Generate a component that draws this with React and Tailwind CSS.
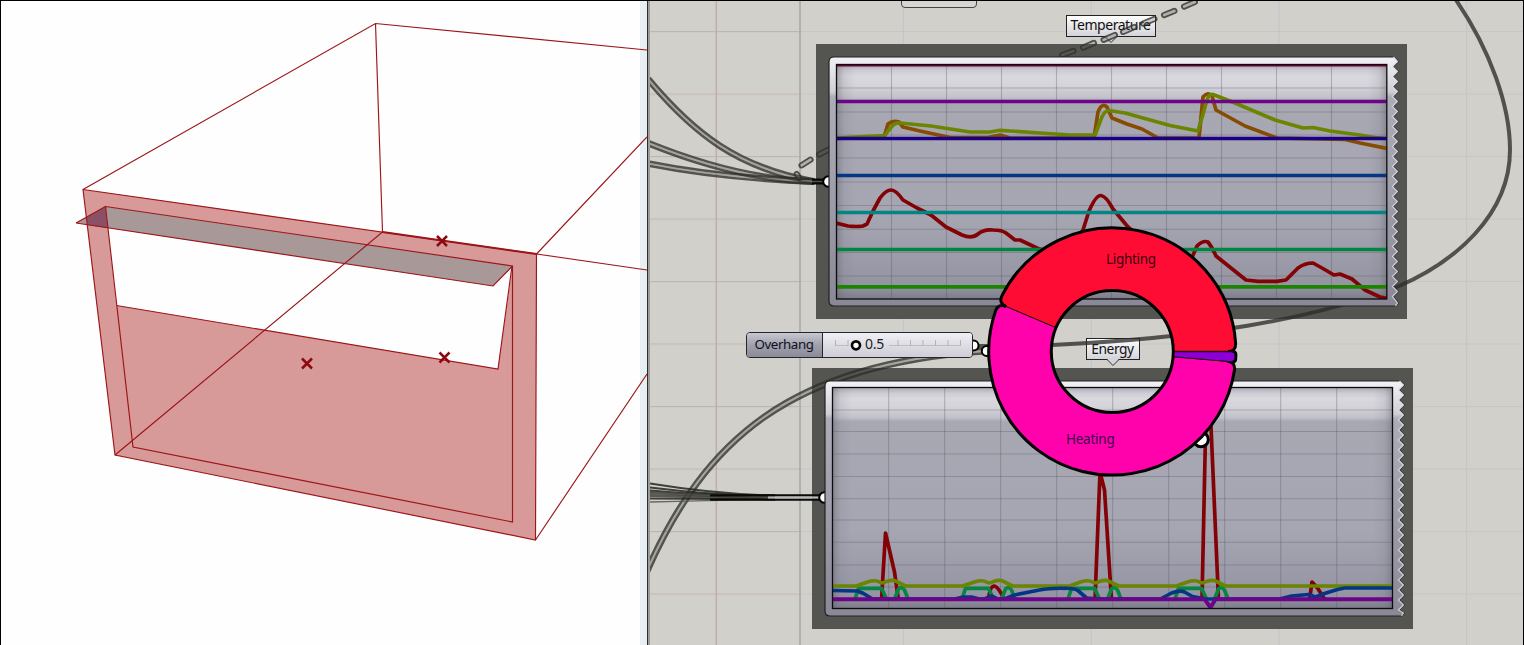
import React from "react";

const RED = "#830206";

function Viewport() {
  const crosses = [
    [442, 241],
    [307, 363.5],
    [444.5, 357.5],
  ];
  return (
    <section className="h-full w-[647px] shrink-0 overflow-hidden border-l border-black bg-[#fefefe]">
      <svg className="block h-full w-full" viewBox="1 0 646 645">
        <rect x="640" y="0" width="7" height="645" fill="#e8eff2" />
        <path
          fillRule="evenodd"
          fill="#d89999"
          d="M83 189.5L536.5 254L535.5 540L115 455Z M105.5 206.5L512.5 266L498 369L116.5 305.5Z"
        />
        <path d="M76 223L105.5 206.5L512.5 266L493 286Z" fill="#a99898" />
        <path d="M86.5 217.5L105.5 206.5L107.5 228L87.5 225Z" fill="#8a5166" />
        <g fill="none" stroke="#9c1519" strokeWidth="1.15">
          <path d="M83 189.5L375.5 23.5L647 50M375.5 23.5L382.5 232L115 455M536.5 254L647 137M536.5 254L647 270M535.5 540L647 374" />
          <path d="M83 189.5L536.5 254L535.5 540L115 455Z" />
          <path d="M105.5 206.5L512.5 266V522L133 447Z" />
          <path d="M116.5 305.5L498 369L512 266" />
          <path d="M76 223L105.5 206.5M512.5 266L493 286L76 223" />
          <path d="M382.5 232L536.5 254" strokeWidth="2" />
        </g>
        <g stroke="#8a0a10" strokeWidth="2.5">
          {crosses.map(([x, y]) => (
            <path key={x} d={`M${x - 5} ${y - 5}L${x + 5} ${y + 5}M${x + 5} ${y - 5}L${x - 5} ${y + 5}`} />
          ))}
        </g>
      </svg>
    </section>
  );
}

function CanvasGrid() {
  const rows = Array.from({ length: 10 }, (_, i) => 31.5 + i * 62.5);
  return (
    <svg className="absolute inset-0 h-full w-full" viewBox="650 0 874 645">
      {rows.map((y, i) => (
        <g key={y}>
          <path d={`M650 ${y}H800`} stroke={i % 2 ? "#c6b5b0" : "#bab8b6"} strokeWidth="1.2" />
          <path d={`M650 ${y + 1}H800`} stroke={i % 2 ? "#cdc6c0" : "#d1c9ba"} strokeWidth=".5" />
          <path d={`M800 ${y}H1524`} stroke="#c5c6c8" strokeWidth="1.2" />
        </g>
      ))}
      <path d="M716.3 0V645" stroke="#c0aeab" strokeWidth="1.5" />
      <path d="M800 0V645" stroke="#adadae" strokeWidth="1.8" />
      <path d="M903.5 0V645M1091.3 0V645M1279 0V645M1466.6 0V645" stroke="#c5c6c8" strokeWidth="1.2" />
    </svg>
  );
}

function Balloon({ className, children }) {
  return (
    <div className={`absolute flex h-[22px] items-center justify-center border-[1.5px] border-[#222] bg-linear-to-b from-white to-[#d3d3da] font-['Noto_Sans','Open_Sans',sans-serif] leading-none tracking-[-0.45px] text-[#111] ${className}`}>
      {children}
      <svg className="absolute top-[19px] left-1/2 -ml-[7px] h-[9px] w-[14px]" viewBox="0 0 14 9">
        <path d="M0 0L7 7.5L14 0Z" fill="#d3d3da" />
        <path d="M.5 1L7 7.5L13.500 1" fill="none" stroke="#333" />
      </svg>
    </div>
  );
}

/* Two parallel strands: a wide stroke whose core is masked out. */
function Wire({ id, d }) {
  return (
    <g fill="none">
      <mask id={id} maskUnits="userSpaceOnUse" x="640" y="0" width="900" height="645">
        <rect x="640" y="0" width="900" height="645" fill="#fff" />
        <path d={d} stroke="#000" strokeWidth="1.9" />
      </mask>
      <path d={d} stroke="#2d2d29" strokeOpacity=".76" strokeWidth="6.800" mask={`url(#${id})`} />
      <path d={d} stroke="#55554f" strokeOpacity=".35" strokeWidth="1.900" />
    </g>
  );
}

const dashes = [
  [796, 173, 800, 179],
  [800.5, 166, 811.500, 159],
  [818, 155, 830, 149],
  [1061, 55.5, 1074.500, 50.5],
  [1082, 48, 1095, 42.5],
  [1102.500, 40.3, 1116, 34.5],
  [1122, 32.5, 1135.500, 26.500],
  [1142, 24, 1155.500, 18.5],
  [1163, 15.5, 1175.500, 10.5],
  [1183, 7, 1196, 1.5],
];

function Dash({ p }) {
  const [x1, y1, x2, y2] = p;
  const len = Math.hypot(x2 - x1, y2 - y1);
  const deg = (Math.atan2(y2 - y1, x2 - x1) * 180) / Math.PI;
  return (
    <rect
      x={-1}
      y={-2.2}
      width={len + 2}
      height={4.4}
      rx={2.2}
      transform={`translate(${x1} ${y1}) rotate(${deg})`}
      fill="#55554f"
      fillOpacity=".25"
      stroke="#30302c"
      strokeOpacity=".78"
      strokeWidth="1.8"
    />
  );
}

function Wires() {
  return (
    <svg className="absolute inset-0 h-full w-full" viewBox="650 0 874 645">
      <Wire id="w1" d="M648 79C694 134 738 168 814 181.500" />
      <Wire id="w2" d="M648 143C690 160 750 180 814 181.500" />
      <Wire id="w3" d="M648 163.500C700 174 750 179 814 181.500" />
      <path d="M812 181.500H826" stroke="#080808" strokeWidth="6" />
      <path d="M812 181.500H826" stroke="#555" strokeWidth="1.400" />
      <Wire id="w4" d="M647 571C705 440 790 364 985 351" />
      <g fill="none" stroke="#252521" strokeOpacity=".85" strokeWidth="1.900">
        <path d="M650 483.500C690 490 730 494.500 775 495.500" />
        <path d="M650 487.500C690 492.500 730 496 775 495.500" />
        <path d="M650 490.500Q710 496 775 495.500" />
        <path d="M650 492.500Q710 496 775 499" stroke="#44443e" strokeWidth="3" />
        <path d="M650 495.500Q710 497 775 499" stroke="#44443e" strokeWidth="3" />
        <path d="M650 498.500L775 499.500" />
        <path d="M650 502Q710 500.500 775 499.500" stroke="#555550" strokeWidth="1.400" />
      </g>
      <path d="M710 495.400L824 495.400M710 499.600H824" stroke="#0a0a08" strokeWidth="2.100" />
      <path d="M768 497.500H824" stroke="#bbb" strokeWidth="2" />
      <path
        d="M1456 0C1490 50 1510 105 1510 150C1510 215 1455 262 1397 287C1310 320 1200 338 1052 345C1020 346 1000 346 974 346"
        fill="none"
        stroke="#2d2d2a"
        strokeOpacity=".78"
        strokeWidth="4"
      />
      {dashes.map((p) => (
        <Dash key={p[0]} p={p} />
      ))}
      <g fill="#fff" stroke="#000" strokeWidth="2">
        <circle cx="828.500" cy="181.500" r="5.300" />
        <circle cx="824.500" cy="497.500" r="5.300" />
        <circle cx="973.500" cy="345.500" r="5" />
        <circle cx="986.800" cy="351" r="5" />
      </g>
    </svg>
  );
}

/* Bezel with a saw-tooth right edge, followed by the recessed plot area. */
function ChartNode({ id, box, plot, valley, tip, firstTip, teeth, shine, cols, rows, className, children }) {
  const [bx, by, bottom] = box;
  const [px, py, pr, pb] = plot;
  let saw = `${valley + 1} ${by}`;
  for (let i = 0; i < teeth; i++) {
    const y = firstTip + i * 10;
    saw += `L${tip} ${y}L${valley} ${y + 5}`;
  }
  saw += `L${tip} ${bottom - 3}L${tip - 2} ${bottom}`;
  const rim = `H${bx + 5}Q${bx} ${bottom} ${bx} ${bottom - 5}V${by + 5}Q${bx} ${by} ${bx + 5} ${by}`;
  const w = pr - px;
  const h = pb - py;
  return (
    <svg className={className} viewBox={`${bx - 1} ${by - 1} ${tip - bx + 3} ${bottom - by + 2}`}>
      <defs>
        <linearGradient id={`${id}bezel`} x1="0" y1="0" x2="0" y2="1">
          <stop offset="0" stopColor="#f2f2f6" />
          <stop offset=".14" stopColor="#cfcfd7" />
          <stop offset=".16" stopColor="#adadba" />
          <stop offset=".5" stopColor="#a0a0ad" />
          <stop offset="1" stopColor="#8a8896" />
        </linearGradient>
        <linearGradient id={`${id}plot`} x1="0" y1="0" x2="0" y2="1">
          <stop offset="0" stopColor="#c1c0c9" />
          <stop offset=".05" stopColor="#d9d8de" />
          <stop offset={shine - 0.05} stopColor="#d5d4db" />
          <stop offset={shine} stopColor="#c3c2cb" />
          <stop offset={shine + 0.02} stopColor="#a8a8b3" />
          <stop offset=".65" stopColor="#a6a5b2" />
          <stop offset="1" stopColor="#9291a0" />
        </linearGradient>
        <linearGradient id={`${id}side`} x1="0" y1="0" x2="1" y2="0">
          <stop offset="0" stopColor="#555560" stopOpacity=".42" />
          <stop offset=".015" stopColor="#777782" stopOpacity=".14" />
          <stop offset=".035" stopColor="#777782" stopOpacity="0" />
          <stop offset=".965" stopColor="#777782" stopOpacity="0" />
          <stop offset=".985" stopColor="#777782" stopOpacity=".14" />
          <stop offset="1" stopColor="#555560" stopOpacity=".42" />
        </linearGradient>
        <linearGradient id={`${id}foot`} x1="0" y1="0" x2="0" y2="1">
          <stop offset="0" stopColor="#555560" stopOpacity=".2" />
          <stop offset=".025" stopColor="#555560" stopOpacity="0" />
          <stop offset=".95" stopColor="#555560" stopOpacity="0" />
          <stop offset="1" stopColor="#555560" stopOpacity=".35" />
        </linearGradient>
        <clipPath id={`${id}clip`}>
          <rect x={px} y={py} width={w} height={h} />
        </clipPath>
      </defs>
      <path d={`M${saw}${rim}Z`} fill={`url(#${id}bezel)`} />
      <path d={`M${tip - 2} ${bottom}${rim}H${valley + 1}`} fill="none" stroke="#222" strokeWidth="1.200" />
      <path d={`M${saw}`} fill="none" stroke="#3a3a3a" strokeWidth="1" transform="translate(.8 0)" />
      <path d={`M${saw}`} fill="none" stroke="#dedee4" strokeOpacity=".8" strokeWidth="1.200" transform="translate(-.6 0)" />
      <rect x={px} y={py} width={w} height={h} fill={`url(#${id}plot)`} />
      <g stroke="#55555f" strokeOpacity=".33" strokeWidth="1.100">
        {cols.map((x) => (
          <path key={x} d={`M${x} ${py}V${pb}`} />
        ))}
        {rows.map((y) => (
          <path key={y} d={`M${px} ${y}H${pr}`} />
        ))}
      </g>
      <rect x={px} y={py} width={w} height={h} fill={`url(#${id}side)`} />
      <rect x={px} y={py} width={w} height={h} fill={`url(#${id}foot)`} />
      <g clipPath={`url(#${id}clip)`} fill="none" strokeWidth="3.700" strokeLinejoin="round">
        {children}
      </g>
      <rect x={px} y={py} width={w} height={h} fill="none" stroke="#0c0c0c" strokeWidth="1.300" />
    </svg>
  );
}

function TemperatureChart() {
  return (
    <ChartNode
      id="t"
      className="absolute top-[55.500px] left-[177.500px] h-[251px] w-[572px]"
      box={[829, 57, 306]}
      plot={[836.500, 64.500, 1386.800, 299]}
      valley={1393}
      tip={1398}
      firstTip={61.500}
      teeth={24}
      shine={0.14}
      cols={Array.from({ length: 9 }, (_, i) => 891.500 + i * 55)}
      rows={[88, 112, 135, 158, 182, 205.500, 229.300, 252.500, 276]}
    >
      <path d="M836 65.500H1388" stroke="#70003c" strokeWidth="2" />
      <path
        stroke={RED}
        d="M836 223L848 226Q857 227 863 226L867 224L873 211L880 198Q886 190 891 190Q896 190 903 200L917 208L931 215L946 227L962 235Q972 239 978 234Q984 229 993 230Q1002 230 1006 233L1015 240H1020L1038 248.500L1060 255L1072 245L1083 230L1089 211Q1096 195 1101 195.500Q1106 196 1113 209L1128 227L1150 245L1190 262L1197 246Q1203 240 1208 242Q1212 247 1216 256L1246 280L1258 281.300H1277L1286 280L1298 268Q1305 263 1313 263L1322 268L1334 275L1340 274L1352 279L1365 290L1380 297L1388 298.500"
      />
      <path
        stroke="#874b02"
        d="M836 138.500L884 137L888 124Q893 120 899 122L903 127L920 131L950 137.500L988 137.500L1000 135L1010 138H1094L1098 112Q1102 102 1107 107L1112 118L1127 124L1142 129L1158 138H1199L1203 97Q1208 91 1212 96L1216 110L1245 126L1277 138L1345 139.500L1360 143L1387 148.500"
      />
      <path
        stroke="#6b8500"
        d="M836 138L885 135.500L888 131L893 125Q896 122.500 900 123L931 126L970 132H990L1000 130.300L1040 133L1070 135H1095L1100 122Q1104 110 1109 110.500L1125 113L1143 118L1170 125.500L1198 131L1203 114L1207 100Q1209 94 1213 94.500L1235 103L1275 120L1303 128L1313 127.500L1330 131L1360 135L1375 137.500L1387 138.500"
      />
      <path d="M836 101.500H1388" stroke="#6b0486" />
      <path d="M836 138.500H1388" stroke="#1b0085" />
      <path d="M836 175.500H1388" stroke="#033786" />
      <path d="M836 212.500H1388" stroke="#038583" />
      <path d="M836 249.500H1388" stroke="#038542" />
      <path d="M836 286.800H1388" stroke="#1b8500" />
    </ChartNode>
  );
}

function EnergyChart() {
  return (
    <ChartNode
      id="e"
      className="absolute top-[380px] left-[174px] h-[237px] w-[582px]"
      box={[825.500, 381, 616]}
      plot={[833, 387.500, 1393, 608.500]}
      valley={1399.500}
      tip={1404.500}
      firstTip={385}
      teeth={23}
      shine={0.135}
      cols={Array.from({ length: 9 }, (_, i) => 889.200 + i * 56)}
      rows={[410, 431.500, 454, 476.500, 498.700, 520, 542.300, 565, 587]}
    >
      <g stroke={RED}>
        <path d="M882 600L886 533L895 572L899 600M989 600Q990 586 995 586Q999 587 1005 600M1095.500 600L1100.500 472L1105 490L1112 600M1202.500 600L1206.500 410L1211 415L1219 600M1310 600L1312.500 582L1318 588L1325 599" />
      </g>
      <g stroke="#058742">
        {[0, 107, 213, 320].map((dx) => (
          <path key={dx} transform={`translate(${dx} 0)`} d="M855.500 599L859 588.300H882L887 599M895 599L899 589Q902 586 905 590L908.500 599" />
        ))}
      </g>
      <path
        stroke="#6b8500"
        d="M832 586H857L868 582Q876 579.500 880 582Q883 584 887 581.500Q894 579 898 582L906 586H963L975 582Q983 579.500 987 582Q990 584 994 581.500Q1001 579 1005 582L1013 586H1070L1081 582Q1089 579.500 1093 582Q1096 584 1100 581.500Q1107 579 1111 582L1119 586H1177L1188 582Q1196 579.500 1200 582Q1203 584 1207 581.500Q1214 579 1218 582L1226 586H1393"
      />
      <path
        stroke="#033786"
        d="M832 590.500L858 591L864 593.500L873 599H955L964 597L972 597L980 599H985L992 596L998 599H1005L1015 595L1040 590Q1050 588 1065 588.300Q1075 588 1079 591L1087 598L1100 599H1161L1172 593Q1181 590 1185 592L1193 596.500L1206 599H1280L1292 596L1309 594.500L1316 597L1325 593.500L1338 589.500L1345 588H1393"
      />
      <path d="M832 599.200H1205L1211 607.500L1216 599.200H1393" stroke="#6b0486" strokeWidth="4" />
    </ChartNode>
  );
}

function SliderNode() {
  const ticks = [12.500, 25, 75, 87.500, 100, 112.500, 125, 137.500];
  return (
    <div className="absolute top-[332px] left-[95.500px] flex h-[26px] w-[227.500px] overflow-hidden rounded-[4px] border-[1.500px] border-[#25252a] font-['Noto_Sans','Open_Sans',sans-serif] leading-none">
      <div className="flex w-[76px] shrink-0 items-center justify-center border-r border-[#25252a] bg-linear-to-b from-[#c8c8d2] via-[#a0a0ad] to-[#8b8a99] pb-px text-[13.300px] tracking-[-0.4px] text-[#10101c]">
        Overhang
      </div>
      <div className="flex flex-1 bg-linear-to-b from-[#eef2f6] via-[#dedde4] to-[#cfced6]">
        <svg className="h-[24px] w-[40px] shrink-0" viewBox="0 0 40 24">
          <path d="M12 12.500H25" stroke="#c2bcbc" />
          {ticks.slice(0, 2).map((x) => (
            <path key={x} d={`M${x} 7V13`} stroke="#b5b3b3" />
          ))}
          <circle cx="33" cy="12.300" r="4" fill="#fff" stroke="#050505" strokeWidth="2.700" />
        </svg>
        <span className="w-[26px] shrink-0 pt-[4px] pl-[2.500px] text-[14px] tracking-[-0.2px] text-[#1c1c24]">0.5</span>
        <svg className="h-[24px] w-[84px] shrink-0" viewBox="66 0 84 24">
          <path d="M66 12.500H138" stroke="#c2bcbc" />
          {ticks.slice(2).map((x) => (
            <path key={x} d={`M${x} 7V13`} stroke="#b5b3b3" />
          ))}
        </svg>
      </div>
    </div>
  );
}

const CX = 1112.300;
const CY = 351.500;
const R_OUT = 123.600;
const R_IN = 61;

function polar(r, deg) {
  const a = (deg * Math.PI) / 180;
  return `${(CX + r * Math.cos(a)).toFixed(2)} ${(CY + r * Math.sin(a)).toFixed(2)}`;
}

/* Ring segment whose two outer corners are rounded; angles run clockwise from east. */
function Segment({ from, to, fill, round }) {
  const large = to - from > 180 ? 1 : 0;
  const c = (round / R_OUT) * 57.300;
  const outer = `L${polar(R_OUT - round, from)}Q${polar(R_OUT, from)} ${polar(R_OUT, from + c)}A${R_OUT} ${R_OUT} 0 ${large} 1 ${polar(R_OUT, to - c)}Q${polar(R_OUT, to)} ${polar(R_OUT - round, to)}`;
  return (
    <g>
      <path
        d={`M${polar(R_IN, from)}${outer}L${polar(R_IN, to)}A${R_IN} ${R_IN} 0 ${large} 0 ${polar(R_IN, from)}Z`}
        fill={fill}
        stroke="#300010"
        strokeWidth="1"
      />
      <path d={`M${polar(R_OUT - round - 0.500, from)}${outer}`} fill="none" stroke="#000" strokeWidth="3" />
    </g>
  );
}

function Donut() {
  return (
    <div className="absolute top-[226px] left-[336px] h-[252px] w-[254px] font-['Noto_Sans','Open_Sans',sans-serif] leading-none">
      <svg className="absolute inset-0 h-full w-full" viewBox="986 226 254 252">
        <circle cx="1201" cy="439.500" r="7.300" fill="#fff" stroke="#000" strokeWidth="3" />
        <Segment from={4.900} to={203} fill="#ff02ab" round={8} />
        <Segment from={203} to={360} fill="#ff0c34" round={8} />
        <Segment from={0} to={4.900} fill="#8c00d8" round={3} />
        <path d="M1173.500 351.500H1235" stroke="#2a0010" strokeWidth="1.600" />
        <circle cx={CX} cy={CY} r={R_IN} fill="none" stroke="#000" strokeWidth="3" />
      </svg>
      <span className="absolute top-[27px] left-[120px] text-[13.500px] tracking-[-0.3px] text-[#3a0010]">Lighting</span>
      <span className="absolute top-[207px] left-[80px] text-[13.500px] tracking-[-0.250px] text-[#3c0050]">Heating</span>
    </div>
  );
}

function NodeCanvas() {
  return (
    <section className="relative h-full flex-1 overflow-hidden bg-[#d1d0ca]">
      <CanvasGrid />
      <div className="absolute -top-[10px] left-[250.500px] h-[18px] w-[76px] rounded-[4px] border-[1.500px] border-[#444] bg-[#d6d5d3]" />
      <div className="absolute top-[43.500px] left-[166px] h-[275.500px] w-[591px] bg-[#545451]" />
      <div className="absolute top-[367.500px] left-[162px] h-[261.500px] w-[601px] bg-[#545451]" />
      <Balloon className="top-[14.500px] left-[415.500px] w-[90px] pb-px text-[14px]">Temperature</Balloon>
      <Balloon className="top-[338px] left-[435.500px] w-[54px] text-[13.800px]">Energy</Balloon>
      <Wires />
      <TemperatureChart />
      <EnergyChart />
      <SliderNode />
      <Donut />
    </section>
  );
}

export default function App() {
  return (
    <main className="relative flex h-[645px] w-[1524px] overflow-hidden bg-[#d1d0ca]">
      <Viewport />
      <div className="w-[3px] shrink-0 border-l border-[#2c2c2e] bg-[#9c9c98]" />
      <NodeCanvas />
      <div className="pointer-events-none absolute inset-0 border-t border-r border-black" />
    </main>
  );
}
